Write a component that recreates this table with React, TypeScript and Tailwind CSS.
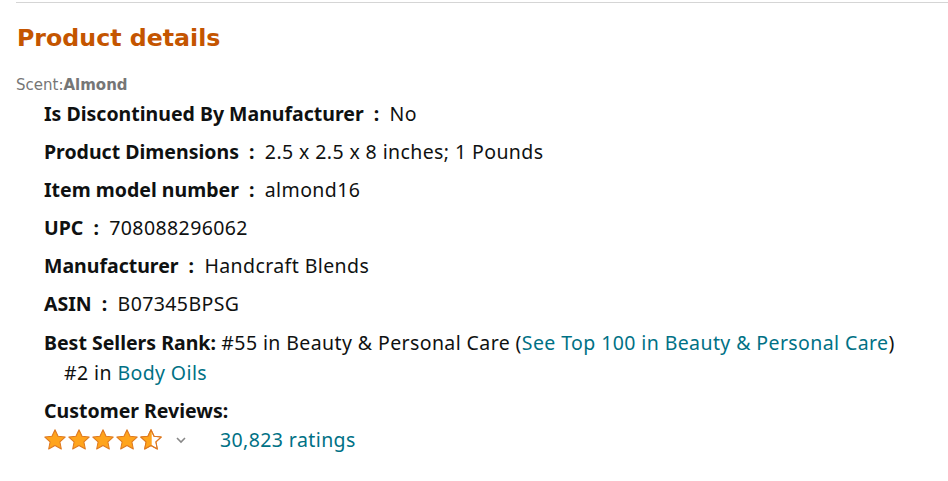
const rows: [string, string][] = [
  ["Is Discontinued By Manufacturer", "No"],
  ["Product Dimensions", "2.5 x 2.5 x 8 inches; 1 Pounds"],
  ["Item model number", "almond16"],
  ["UPC", "708088296062"],
  ["Manufacturer", "Handcraft Blends"],
  ["ASIN", "B07345BPSG"],
];

const starPath =
  "M10 1.2l2.6 5.6 6.1.7-4.5 4.2 1.2 6-5.4-3-5.4 3 1.2-6L1.3 7.5l6.1-.7z";

function Star({ half }: { half?: boolean }) {
  return (
    <svg width="22" height="22" viewBox="0.6 0.6 18.8 18.8">
      <defs>
        <clipPath id="halfclip">
          <rect x="0" y="0" width="10.6" height="20" />
        </clipPath>
      </defs>
      {half ? (
        <>
          <path d={starPath} fill="#fff" stroke="#de7921" strokeWidth="0.9" strokeLinejoin="round" />
          <path d={starPath} fill="#ffa41c" clipPath="url(#halfclip)" />
          <path d={starPath} fill="none" stroke="#de7921" strokeWidth="0.9" strokeLinejoin="round" />
        </>
      ) : (
        <path d={starPath} fill="#ffa41c" stroke="#de7921" strokeWidth="0.9" strokeLinejoin="round" />
      )}
    </svg>
  );
}

export default function App() {
  return (
    <div className="min-h-screen bg-white text-[#0f1111] font-['Noto_Sans',sans-serif] text-[19.5px] tracking-[0.4px]">
      <div className="ml-[16px] mt-[2px] border-t border-[#d5d5d5]" />
      <h2 className="ml-[17px] mt-[19px] font-['DejaVu_Sans',Verdana,sans-serif] text-[23.7px] font-bold leading-[32px] text-[#c45500] tracking-normal">
        Product details
      </h2>
      <div className="ml-[16px] mt-[22px] font-['DejaVu_Sans',Verdana,sans-serif] text-[15px] leading-[18px] text-[#767676] tracking-normal">
        Scent:<span className="font-bold">Almond</span>
      </div>
      <ul className="ml-[44px] mt-[1px] flex flex-col">
        {rows.map(([k, v]) => (
          <li key={k} className="h-[38px] leading-[38px]">
            <span className="font-bold tracking-normal">{k}</span>
            <span className="font-bold mx-[10px]">:</span>
            <span>{v}</span>
          </li>
        ))}
        <li className="leading-[30px] mt-[5px]">
          <span className="font-bold tracking-normal">Best Sellers Rank:</span> #55 in Beauty &amp; Personal Care (
          <span className="text-[#007185]">See Top 100 in Beauty &amp; Personal Care</span>)
          <div className="ml-[20px]">
            #2 in <span className="text-[#007185]">Body Oils</span>
          </div>
        </li>
        <li className="mt-[9px] leading-[28px]">
          <div className="font-bold tracking-normal">Customer Reviews:</div>
          <div className="flex items-center h-[30px]">
            <div className="flex gap-[2px]">
              <Star />
              <Star />
              <Star />
              <Star />
              <Star half />
            </div>
            <svg width="12" height="8" viewBox="0 0 12 8" className="ml-[13px]">
              <path d="M2 2l4 4 4-4" fill="none" stroke="#888" strokeWidth="1.6" />
            </svg>
            <span className="ml-[33px] text-[#007185]">30,823 ratings</span>
          </div>
        </li>
      </ul>
    </div>
  );
}
